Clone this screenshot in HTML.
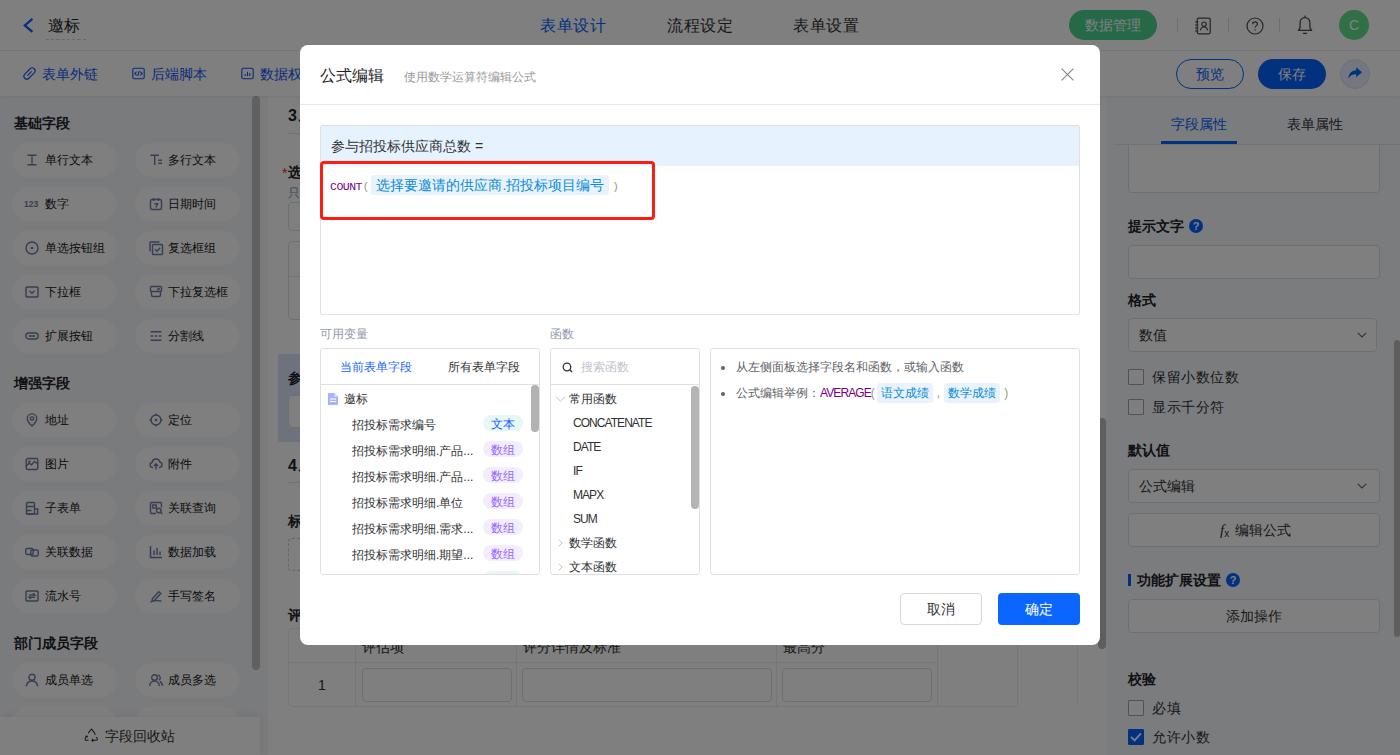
<!DOCTYPE html>
<html lang="zh">
<head>
<meta charset="utf-8">
<title>公式编辑</title>
<style>
*{box-sizing:border-box;margin:0;padding:0}
html,body{width:1400px;height:755px;overflow:hidden;background:#fff}
body{font-family:"Liberation Sans",sans-serif;font-size:14px;color:#303133;position:relative}
.a{position:absolute}
.t{position:absolute;white-space:nowrap}
svg{display:block;position:absolute;overflow:visible}
/* ---------- background page ---------- */
#page{position:absolute;left:0;top:0;width:1400px;height:755px;background:#fff;overflow:hidden;z-index:0}
#topbar{left:0;top:0;width:1400px;height:51px;background:#fff;border-bottom:1px solid #ebebeb}
#toolbar{left:0;top:51px;width:1400px;height:45px;background:#fff;box-shadow:0 1px 3px rgba(0,0,0,.07);z-index:2}
.nav{font-size:16px;letter-spacing:.5px;height:24px;line-height:24px;top:13.500px;color:#303133}
.lnk{font-size:14px;height:20px;line-height:20px;top:64px;color:#1456f0}
#left{left:0;top:96px;width:268px;height:659px;background:#f5f6fa}
.sec{font-size:14px;font-weight:bold;left:14px;height:20px;line-height:20px;color:#1f2329}
.pill{position:absolute;width:105px;height:34px;border-radius:17px;background:#fefefe}
.pill span{position:absolute;left:33px;top:0;height:34px;line-height:35px;font-size:12px;color:#14171c;white-space:nowrap}
.pill svg{left:11px;top:10px;width:14px;height:14px;stroke:#6f7da3;fill:none;stroke-width:1.4}
#center{left:268px;top:96px;width:838px;height:659px;background:#fff}
.h{font-size:16px;font-weight:bold;left:20px;height:22px;line-height:22px;color:#1f2329}
.fl{font-size:14px;font-weight:bold;left:20px;height:20px;line-height:20px;color:#1f2329}
.hr{position:absolute;left:20px;width:789px;height:1px;background:#e4e7ed}
.inp{position:absolute;background:#fff;border:1px solid #dcdfe6;border-radius:4px}
#right{left:1106px;top:96px;width:294px;height:659px;background:#f6f8fc}
.lab{font-size:14px;font-weight:bold;left:1128px;height:20px;line-height:20px;color:#1f2329}
.box{position:absolute;left:1128px;width:252px;background:#fff;border:1px solid #dcdfe6;border-radius:4px}
.cb{position:absolute;left:1128px;width:16px;height:16px;background:#fff;border:1px solid #a2a3b8;border-radius:1px}
.cbl{font-size:14px;letter-spacing:.5px;left:1152px;height:20px;line-height:20px;color:#303133}
/* ---------- overlay + modal ---------- */
#mask{left:0;top:0;width:1400px;height:755px;background:rgba(0,0,0,.5);z-index:1}
#modal{left:300px;top:45px;width:800px;height:600px;background:#fff;border-radius:8px;z-index:2}
.pan{position:absolute;background:#fff;border:1px solid #e0e0e0;border-radius:3px;overflow:hidden}
.r12{position:absolute;white-space:nowrap;font-size:12px;height:18px;line-height:18px;color:#303133}
.tag{position:absolute;left:162px;width:40px;height:16px;border-radius:8px;font-size:12px;line-height:19px;text-align:center;margin-top:-1px}
.tg1{background:#e6f7f6;color:#1f5bff}
.tg2{background:#f3eeff;color:#9666ff}
.fn{position:absolute;white-space:nowrap;font-size:12px;height:18px;line-height:18px;color:#303133;letter-spacing:-.95px}
.tok{display:inline-block;background:#e8f3fd;color:#0a8bd6;border-radius:3px}
.kw{color:#770088}.br{color:#999977}
</style>
</head>
<body>
<div id="page">
  <div id="topbar" class="a">
    <svg style="left:22px;top:17px;width:12px;height:16px" viewBox="0 0 12 16"><path d="M10.4 1.9 L2.8 8.4 L10.4 14.9" fill="none" stroke="#0562ff" stroke-width="2.3"/></svg>
    <div class="t" style="left:48px;top:14px;height:24px;line-height:24px;font-size:16px;color:#1f2329">邀标</div>
    <div class="a" style="left:46px;top:39px;width:41px;height:1px;background:repeating-linear-gradient(90deg,#d4d4d4 0 3.250px,transparent 3.250px 5.250px)"></div>
    <div class="t nav" style="left:540px;color:#0562ff">表单设计</div>
    <div class="t nav" style="left:667px">流程设定</div>
    <div class="t nav" style="left:793px">表单设置</div>
    <div class="a" style="left:1069px;top:10px;width:88px;height:30px;border-radius:15px;background:#4bd291;color:#fff;font-size:14px;line-height:30px;text-align:center">数据管理</div>
    <div class="a" style="left:1177px;top:18px;width:1px;height:14px;background:#dcdcdc"></div>
    <div class="a" style="left:1228px;top:18px;width:1px;height:14px;background:#dcdcdc"></div>
    <div class="a" style="left:1279px;top:18px;width:1px;height:14px;background:#dcdcdc"></div>
    <svg style="left:1194px;top:17px;width:18px;height:18px" viewBox="0 0 18 18" fill="none" stroke="#4a4a4a" stroke-width="1.2"><rect x="3.2" y="1.2" width="13" height="15.6" rx="1.5"/><path d="M1 5h3.4M1 8h3.4M1 11h3.4M1 14h3.4"/><circle cx="10" cy="7.2" r="2.2"/><path d="M6.4 13.4c.4-2.4 1.8-3.4 3.6-3.4s3.2 1 3.6 3.4"/></svg>
    <svg style="left:1246px;top:17px;width:18px;height:18px" viewBox="0 0 18 18" fill="none" stroke="#4a4a4a" stroke-width="1.2"><circle cx="9" cy="9" r="8"/><path d="M6.6 7.2c0-1.5 1-2.4 2.4-2.4s2.4.9 2.4 2.2c0 1.6-2.3 1.7-2.3 3.6"/><circle cx="9.1" cy="12.9" r=".7" fill="#4a4a4a" stroke="none"/></svg>
    <svg style="left:1297px;top:15px;width:16px;height:20px" viewBox="0 0 16 20" fill="none" stroke="#4a4a4a" stroke-width="1.3"><path d="M8 2.6c-3 0-4.9 2.300-4.900 5.200v4.800L1.400 15.400h13.200l-1.700-2.800V7.800c0-2.900-1.900-5.200-4.900-5.200z" stroke-linejoin="round"/><path d="M6 18.400h4"/><circle cx="8" cy="1.300" r=".8" fill="#4a4a4a" stroke="none"/></svg>
    <div class="a" style="left:1339px;top:10px;width:30px;height:30px;border-radius:15px;background:#62e08c;color:#fff;font-size:14px;line-height:30px;text-align:center">C</div>
  </div>
  <div id="toolbar" class="a">
    <svg style="left:22px;top:15px;width:15px;height:15px" viewBox="0 0 15 15" fill="none" stroke="#1456f0" stroke-width="1.100"><g transform="rotate(-45 7.500 7.500)"><rect x=".8" y="4.600" width="13.400" height="5.800" rx="2.900"/><path d="M4.600 7.500h5.800"/></g></svg>
    <div class="t lnk" style="left:42px;top:13px">表单外链</div>
    <svg style="left:132px;top:16px;width:13px;height:13px" viewBox="0 0 13 13" fill="none" stroke="#1456f0" stroke-width="1.100"><rect x=".8" y="1.300" width="11.400" height="10.400" rx="1.500"/><path d="M4.600 4.600L2.800 6.500l1.800 1.900M8.400 4.600l1.800 1.900-1.800 1.900M7.300 4L5.700 9"/></svg>
    <div class="t lnk" style="left:151px;top:13px">后端脚本</div>
    <svg style="left:241px;top:16px;width:13px;height:13px" viewBox="0 0 13 13" fill="none" stroke="#1456f0" stroke-width="1.100"><rect x=".8" y="1.300" width="11.400" height="10.400" rx="1.500"/><path d="M4.200 9V7M6.500 9V4.800M8.800 9V6"/></svg>
    <div class="t lnk" style="left:260px;top:13px">数据权限</div>
    <div class="a" style="left:1176px;top:8px;width:68px;height:30px;border-radius:15px;border:1px solid #0562ff;color:#0562ff;font-size:14px;line-height:28px;text-align:center">预览</div>
    <div class="a" style="left:1258px;top:8px;width:68px;height:30px;border-radius:15px;background:#0562ff;color:#fff;font-size:14px;line-height:30px;text-align:center">保存</div>
    <div class="a" style="left:1340px;top:8px;width:30px;height:30px;border-radius:15px;background:#e8eeff;border:1px solid #d6e0fb"></div>
    <svg style="left:1347px;top:15px;width:16px;height:15px" viewBox="0 0 16 15"><path d="M9.200 1.200L15 6.200 9.200 11.200V8.200C5.600 8.100 3.200 9.400 1.400 12.800 1.600 8 4.200 4.600 9.200 4.300z" fill="#0562ff"/></svg>
  </div>
  <div id="left" class="a">
    <div class="t sec" style="top:17px">基础字段</div>
    <div class="pill" style="left:12px;top:47px"><svg viewBox="0 0 14 14" style="left:13px"><path d="M2.500 2.300h9M2.500 11.700h9M7 2.300v9.400"/></svg><span>单行文本</span></div>
    <div class="pill" style="left:135px;top:47px"><svg viewBox="0 0 14 14" style="left:13.500px"><path d="M1.500 2.300h8.500M5.700 2.300v9.700M9.200 7.300h3.800M9.200 10.300h3.800"/></svg><span>多行文本</span></div>
    <div class="pill" style="left:12px;top:91px"><svg viewBox="0 0 14 14" style="left:13px"><text x="-1" y="10.300" font-size="8.500" font-weight="bold" font-family="Liberation Sans,sans-serif" fill="#6f7da3" stroke="none">123</text></svg><span>数字</span></div>
    <div class="pill" style="left:135px;top:91px"><svg viewBox="0 0 14 14" style="left:13.500px"><rect x="1.500" y="2.500" width="11" height="10" rx="1.500"/><path d="M4.500 1v3M9.500 1v3M5.300 6.800h3.400L6.800 10.500"/></svg><span>日期时间</span></div>
    <div class="pill" style="left:12px;top:135px"><svg viewBox="0 0 14 14" style="left:13px"><circle cx="7" cy="7" r="6"/><circle cx="7" cy="7" r="1.300" fill="#6f7da3" stroke="none"/></svg><span>单选按钮组</span></div>
    <div class="pill" style="left:135px;top:135px"><svg viewBox="0 0 14 14" style="left:13.500px"><rect x="3.500" y="3.500" width="10" height="10" rx="1"/><path d="M1 10.500V1.500a.5 .5 0 0 1 .5-.5h9M6 8.300l2 2 3.200-3.600"/></svg><span>复选框组</span></div>
    <div class="pill" style="left:12px;top:179px"><svg viewBox="0 0 14 14" style="left:13px"><rect x="1" y="2" width="12" height="10" rx="1"/><path d="M4.500 5.800L7 8.300l2.500-2.500"/></svg><span>下拉框</span></div>
    <div class="pill" style="left:135px;top:179px"><svg viewBox="0 0 14 14" style="left:13.500px"><rect x="1.500" y="1.500" width="11" height="5" rx="1"/><path d="M8.200 3.800l1 1 1.600-1.800M2.500 6.500v3.500a1.500 1.500 0 0 0 1.500 1.500h6a1.500 1.500 0 0 0 1.500-1.500V6.500"/></svg><span>下拉复选框</span></div>
    <div class="pill" style="left:12px;top:223px"><svg viewBox="0 0 14 14" style="left:13px"><rect x=".8" y="4" width="12.400" height="6" rx="3"/><path d="M3.800 7h6.400" stroke-width="1.600"/></svg><span>扩展按钮</span></div>
    <div class="pill" style="left:135px;top:223px"><svg viewBox="0 0 14 14" style="left:13.500px"><path d="M1.500 2.800h11M1.500 11.200h11M1.500 7h2.600M5.700 7h2.600M9.900 7h2.600"/></svg><span>分割线</span></div>
    <div class="t sec" style="top:277px">增强字段</div>
    <div class="pill" style="left:12px;top:307px"><svg viewBox="0 0 14 14" style="left:13px"><path d="M7 13S2.300 9.200 2.300 5.600a4.700 4.700 0 0 1 9.400 0C11.700 9.200 7 13 7 13z"/><circle cx="7" cy="5.600" r="1.700"/></svg><span>地址</span></div>
    <div class="pill" style="left:135px;top:307px"><svg viewBox="0 0 14 14" style="left:13.500px"><circle cx="7" cy="7" r="5"/><circle cx="7" cy="7" r="1.300" fill="#6f7da3" stroke="none"/><path d="M7 .5v2.500M7 11v2.500M.5 7h2.500M11 7h2.500"/></svg><span>定位</span></div>
    <div class="pill" style="left:12px;top:351px"><svg viewBox="0 0 14 14" style="left:13px"><rect x="1.200" y="1.500" width="11.600" height="11" rx="1.500"/><path d="M1.200 9l3-2.800 2.300 1.600 3-3.300 3.300 2.500M4.300 4.600h.1" /><circle cx="4.300" cy="4.600" r=".6"/></svg><span>图片</span></div>
    <div class="pill" style="left:135px;top:351px"><svg viewBox="0 0 14 14" style="left:13.500px"><path d="M4 10.500H3.400A2.700 2.700 0 0 1 3.200 5.200 3.900 3.900 0 0 1 10.800 5 2.800 2.800 0 0 1 10.600 10.500H10M7 12.500V7M4.900 8.900L7 6.800l2.100 2.100"/></svg><span>附件</span></div>
    <div class="pill" style="left:12px;top:395px"><svg viewBox="0 0 14 14" style="left:13px"><rect x="1.500" y="1.500" width="8" height="11.500" rx="1"/><path d="M1.500 5.500h8M9.500 8h3.200v5H1.500M1.500 9.500h5"/></svg><span>子表单</span></div>
    <div class="pill" style="left:135px;top:395px"><svg viewBox="0 0 14 14" style="left:13.500px"><path d="M12.500 6.500V2.500a1 1 0 0 0-1-1h-9a1 1 0 0 0-1 1v9a1 1 0 0 0 1 1h4.500"/><rect x="3.800" y="4" width="3.500" height="3"/><circle cx="9.800" cy="9.500" r="2.300"/><path d="M11.500 11.200l1.800 1.800"/></svg><span>关联查询</span></div>
    <div class="pill" style="left:12px;top:439px"><svg viewBox="0 0 14 14" style="left:13px"><rect x=".8" y="3.500" width="7.400" height="6" rx="1.500"/><rect x="5.800" y="5" width="7.400" height="6" rx="1.500"/></svg><span>关联数据</span></div>
    <div class="pill" style="left:135px;top:439px"><svg viewBox="0 0 14 14" style="left:13.500px"><path d="M1.500 1v11.500h11.500M5 10V5.500M8 10V3M11 10V6.500" stroke-width="1.500"/></svg><span>数据加载</span></div>
    <div class="pill" style="left:12px;top:483px"><svg viewBox="0 0 14 14" style="left:13px"><rect x="1" y="2" width="12" height="10" rx="1"/><path d="M4 6h6l-2-1.800M10 8.300H4l2 1.800"/></svg><span>流水号</span></div>
    <div class="pill" style="left:135px;top:483px"><svg viewBox="0 0 14 14" style="left:13.500px"><path d="M3.500 9.500l6.300-6.800 2 1.800-6.300 6.800-2.700.8zM1.500 13c3-1.500 6-1.800 11-1"/></svg><span>手写签名</span></div>
    <div class="t sec" style="top:537px">部门成员字段</div>
    <div class="pill" style="left:12px;top:567px"><svg viewBox="0 0 14 14" style="left:13px"><circle cx="7" cy="4.300" r="3"/><path d="M1.300 13.300c.5-3.600 2.800-5.300 5.700-5.300s5.200 1.700 5.700 5.300"/></svg><span>成员单选</span></div>
    <div class="pill" style="left:135px;top:567px"><svg viewBox="0 0 14 14" style="left:13.500px"><circle cx="5.500" cy="4.500" r="2.800"/><path d="M.6 13c.4-3.300 2.400-4.900 4.900-4.900s4.500 1.600 4.900 4.900M8.500 1.900a2.800 2.800 0 0 1 1.200 5.300M10.800 8.500c1.600.7 2.500 2.200 2.800 4.500"/></svg><span>成员多选</span></div>
    <div class="pill" style="left:12px;top:611px"><svg viewBox="0 0 14 14" style="left:13px"></svg><span>部门单选</span></div>
    <div class="pill" style="left:135px;top:611px"><svg viewBox="0 0 14 14" style="left:13.500px"></svg><span>部门多选</span></div>
    <div class="a" style="left:252px;top:0;width:8px;height:574px;border-radius:4px;background:#c1c1c1"></div>
    <div class="a" style="left:0;top:621px;width:260px;height:38px;background:#fff;box-shadow:2px -2px 8px rgba(0,0,0,.06)"></div>
    <svg style="left:84px;top:632px;width:15px;height:15px" viewBox="0 0 15 15" fill="none" stroke="#303133" stroke-width="1.100"><path d="M5.600 3.300L7.500 1l1.900 2.300M9.400 3.300l2 3.400M4.300 5.300l1.300-2M2.600 8.200l-1.300 2.300c-.4.800 0 1.700 1 1.700h2.200M1.500 8.800l1.200-.8 1 1.200M8 12.200h4.200c1 0 1.500-.900 1-1.700L12.400 9M9.200 11l-1.300 1.200 1.300 1.300"/></svg>
    <div class="t" style="left:105px;top:630px;height:20px;line-height:20px;font-size:14px;color:#303133">字段回收站</div>
  </div>
  <div id="center" class="a">
    <div class="t h" style="top:9px">3、选择供应商</div><div class="hr" style="top:37px"></div>
    <div class="t" style="left:14px;top:67px;height:20px;line-height:20px;font-size:14px;color:#f5222d">*</div><div class="t fl" style="top:66px">选择要邀请的供应商</div>
    <div class="t" style="left:20px;top:89px;height:17px;line-height:17px;font-size:12px;color:#7088c8">只能选择已审核通过的供应商</div>
    <div class="inp" style="left:20px;top:106px;width:789px;height:29px"></div>
    <div class="inp" style="left:20px;top:145px;width:789px;height:79px"><div class="a" style="left:0;top:34px;width:787px;height:1px;background:#e4e7ed"></div></div>
    <div class="a" style="left:10px;top:258px;width:812px;height:88px;background:#dde5f9"></div>
    <div class="t fl" style="top:272px">参与招投标供应商总数</div>
    <div class="inp" style="left:20px;top:299px;width:789px;height:33px"></div>
    <div class="t h" style="top:359px">4、评标</div><div class="hr" style="top:386px"></div>
    <div class="t fl" style="top:415px">标书</div>
    <div class="inp" style="left:20px;top:442px;width:789px;height:33px;border-style:dashed;border-color:#c8ccd4"></div>
    <div class="t fl" style="top:509px">评分标准</div>
    <div class="inp" style="left:20px;top:532px;width:730px;height:79px;border-color:#ececec;border-radius:4px">
      <div class="a" style="left:66px;top:0;width:1px;height:77px;background:#ececec"></div>
      <div class="a" style="left:227px;top:0;width:1px;height:77px;background:#ececec"></div>
      <div class="a" style="left:487px;top:0;width:1px;height:77px;background:#ececec"></div>
      <div class="a" style="left:648px;top:0;width:1px;height:77px;background:#ececec"></div>
      <div class="a" style="left:0;top:33px;width:648px;height:1px;background:#ececec"></div>
      <div class="t" style="left:73px;top:8px;height:20px;line-height:20px;font-size:14px;color:#303133">评估项</div>
      <div class="t" style="left:234px;top:8px;height:20px;line-height:20px;font-size:14px;color:#303133">评分详情及标准</div>
      <div class="t" style="left:494px;top:8px;height:20px;line-height:20px;font-size:14px;color:#303133">最高分</div>
      <div class="t" style="left:0;top:46px;width:66px;text-align:center;height:20px;line-height:20px;font-size:14px;color:#303133">1</div>
      <div class="inp" style="left:73px;top:39px;width:150px;height:34px"></div>
      <div class="inp" style="left:233px;top:39px;width:250px;height:34px"></div>
      <div class="inp" style="left:493px;top:39px;width:150px;height:34px"></div>
    </div>
    <div class="a" style="left:770px;top:532px;width:40px;height:79px;border-right:1px solid #ececec;border-bottom:1px solid transparent;border-bottom-right-radius:5px"></div>
    <div class="a" style="left:830px;top:322px;width:8px;height:231px;border-radius:4px;background:#bdbdbd"></div>
  </div>
  <div id="right" class="a">
    <div class="box" style="left:22px;top:24px;height:73px"></div>
    <div class="a" style="left:0;top:0;width:294px;height:49px;background:#f6f8fc;border-bottom:1px solid #e1e4ea"></div>
    <div class="a" style="left:0;top:48px;width:8px;height:1px;background:#f6f8fc"></div>
    <div class="t" style="left:65px;top:18px;height:20px;line-height:20px;font-size:14px;color:#0562ff">字段属性</div>
    <div class="t" style="left:181px;top:18px;height:20px;line-height:20px;font-size:14px;color:#303133">表单属性</div>
    <div class="a" style="left:55px;top:45px;width:76px;height:3px;background:#0562ff"></div>
    <div class="t lab" style="left:22px;top:120px">提示文字</div><div class="a" style="left:83px;top:123px;width:14px;height:14px;border-radius:7px;background:#0562ff;color:#fff;font-size:11px;font-weight:bold;line-height:14px;text-align:center">?</div>
    <div class="box" style="left:22px;top:149px;height:34px"></div>
    <div class="t lab" style="left:22px;top:194px">格式</div>
    <div class="box" style="left:22px;top:222px;height:34px;width:249px"><div class="t" style="left:10px;top:6px;height:20px;line-height:20px;font-size:14px;color:#303133">数值</div><svg style="left:228px;top:13px;width:10px;height:6px" viewBox="0 0 10 6"><path d="M.8.8L5 5l4.200-4.200" fill="none" stroke="#606266" stroke-width="1.100"/></svg></div>
    <div class="cb" style="left:22px;top:273px"></div>
    <div class="t cbl" style="left:46px;top:271px">保留小数位数</div>
    <div class="cb" style="left:22px;top:303px"></div>
    <div class="t cbl" style="left:46px;top:301px">显示千分符</div>
    <div class="t lab" style="left:22px;top:344px">默认值</div>
    <div class="box" style="left:22px;top:373px;height:34px"><div class="t" style="left:10px;top:6px;height:20px;line-height:20px;font-size:14px;color:#303133">公式编辑</div><svg style="left:228px;top:13px;width:10px;height:6px" viewBox="0 0 10 6"><path d="M.8.8L5 5l4.200-4.200" fill="none" stroke="#606266" stroke-width="1.100"/></svg></div>
    <div class="box" style="left:22px;top:417px;height:34px"><div class="t" style="left:91px;top:6px;height:20px;line-height:20px;font-size:14px;color:#303133"><i style="font-family:'Liberation Serif',serif;font-size:15px">f</i><span style="font-size:10px;position:relative;top:2px;margin-right:6px">x</span>编辑公式</div></div>
    <div class="a" style="left:22px;top:478px;width:3px;height:12px;background:#0562ff"></div>
    <div class="t lab" style="left:31px;top:474px">功能扩展设置</div><div class="a" style="left:120px;top:477px;width:14px;height:14px;border-radius:7px;background:#0562ff;color:#fff;font-size:11px;font-weight:bold;line-height:14px;text-align:center">?</div>
    <div class="box" style="left:22px;top:503px;height:34px;text-align:center;line-height:32px;font-size:14px;color:#303133">添加操作</div>
    <div class="t lab" style="left:22px;top:573px">校验</div>
    <div class="cb" style="left:22px;top:604px"></div>
    <div class="t cbl" style="left:46px;top:602px">必填</div>
    <div class="cb" style="left:22px;top:633px;background:#0562ff;border-color:#0562ff"><svg style="left:1px;top:2px;width:12px;height:10px" viewBox="0 0 12 10"><path d="M1 4.800l3.600 3.600L11 1.400" fill="none" stroke="#fff" stroke-width="1.700"/></svg></div>
    <div class="t cbl" style="left:46px;top:631px">允许小数</div>
    <div class="a" style="left:288px;top:244px;width:6px;height:297px;border-radius:3px;background:#bdbdbd"></div>
  </div>
</div>
<div id="mask" class="a"></div>
<div id="modal" class="a">
  <div class="t" style="left:20px;top:19px;height:24px;line-height:24px;font-size:16px;color:#1f2329">公式编辑</div>
  <div class="t" style="left:104px;top:23px;height:18px;line-height:18px;font-size:12px;color:#999">使用数学运算符编辑公式</div>
  <svg style="left:761px;top:23.300px;width:13px;height:13px" viewBox="0 0 13 13"><path d="M.6.600l11.800 11.800M12.400.600L.6 12.400" stroke="#858585" stroke-width="1.150" fill="none"/></svg>
  <div class="a" style="left:0;top:59px;width:800px;height:1px;background:#e8e8e8"></div>
  <div class="pan" style="left:20px;top:80px;width:760px;height:190px;border-radius:2px">
    <div class="a" style="left:0;top:0;width:758px;height:40px;background:#e6f3fe"></div>
    <div class="t" style="left:10px;top:10px;height:20px;line-height:20px;font-size:14px;color:#303133">参与招投标供应商总数 =</div>
    <div class="t" style="left:9px;top:48px;height:22px;line-height:22px;font-size:14px"><span class="kw" style="font-family:'Liberation Mono',monospace;font-size:11.500px;letter-spacing:-.5px;position:relative;top:-.5px">COUNT</span><span class="br" style="font-family:'Liberation Mono',monospace;font-size:11.500px;margin-left:.5px">(</span><span class="tok" style="margin:0 3px 0 2px;padding:0 5px;height:20px;line-height:20px">选择要邀请的供应商.招投标项目编号</span><span class="br" style="font-family:'Liberation Mono',monospace;font-size:11px">)</span></div>
  </div>
  <div class="a" style="left:20px;top:116px;width:335px;height:59px;border:3px solid #fb1d0f;border-radius:4px"></div>
  <div class="t" style="left:20px;top:280px;height:18px;line-height:18px;font-size:12px;color:#8f98aa">可用变量</div>
  <div class="t" style="left:250px;top:280px;height:18px;line-height:18px;font-size:12px;color:#8f98aa">函数</div>
  <div class="pan" style="left:20px;top:303px;width:220px;height:227px">
    <div class="r12" style="left:19px;top:9px;color:#1a66ff">当前表单字段</div><div class="r12" style="left:127px;top:9px">所有表单字段</div>
    <div class="a" style="left:0;top:35px;width:218px;height:1px;background:#e0e0e0"></div>
    <svg style="left:7px;top:44px;width:10px;height:12px" viewBox="0 0 10 12"><path d="M0 0h6.500L10 3.500V12H0z" fill="#a5b4fb"/><path d="M6.300 0v3.700H10" fill="#d6dcff"/><path d="M2 6h6M2 8.500h6" stroke="#fff" stroke-width="1.100"/></svg>
    <div class="r12" style="left:23px;top:41px">邀标</div>
    <div class="r12" style="left:31px;top:67px">招投标需求编号</div><div class="tag tg1" style="top:67px">文本</div>
    <div class="r12" style="left:31px;top:93px">招投标需求明细.产品...</div><div class="tag tg2" style="top:93px">数组</div>
    <div class="r12" style="left:31px;top:119px">招投标需求明细.产品...</div><div class="tag tg2" style="top:119px">数组</div>
    <div class="r12" style="left:31px;top:145px">招投标需求明细.单位</div><div class="tag tg2" style="top:145px">数组</div>
    <div class="r12" style="left:31px;top:171px">招投标需求明细.需求...</div><div class="tag tg2" style="top:171px">数组</div>
    <div class="r12" style="left:31px;top:197px">招投标需求明细.期望...</div><div class="tag tg2" style="top:197px">数组</div>
    <div class="r12" style="left:31px;top:223px">招投标需求明细.备注</div><div class="tag tg1" style="top:223px">文本</div>
    <div class="a" style="left:210px;top:36px;width:8px;height:47px;border-radius:4px;background:#b2b2b2"></div>
  </div>
  <div class="pan" style="left:250px;top:303px;width:150px;height:227px">
    <svg style="left:11px;top:13px;width:11px;height:11px" viewBox="0 0 11 11"><circle cx="5" cy="5" r="3.800" fill="none" stroke="#303133" stroke-width="1.300"/><path d="M7.800 7.800l2.200 2.200" stroke="#303133" stroke-width="1.300"/></svg>
    <div class="r12" style="left:30px;top:9px;color:#c0c4cc">搜索函数</div>
    <div class="a" style="left:0;top:35px;width:148px;height:1px;background:#e0e0e0"></div>
    <svg style="left:4px;top:47px;width:11px;height:6px" viewBox="0 0 11 6"><path d="M.7.600L5.500 5.200 10.300.600" fill="none" stroke="#c0c4cc" stroke-width="1"/></svg>
    <div class="r12" style="left:18px;top:41px">常用函数</div>
    <div class="fn" style="left:22px;top:64.5px">CONCATENATE</div>
    <div class="fn" style="left:22px;top:88.5px">DATE</div>
    <div class="fn" style="left:22px;top:112.5px">IF</div>
    <div class="fn" style="left:22px;top:136.5px">MAPX</div>
    <div class="fn" style="left:22px;top:160.5px">SUM</div>
    <svg style="left:7px;top:189.5px;width:5px;height:8px" viewBox="0 0 5 8"><path d="M.7.700L4.200 4 .7 7.300" fill="none" stroke="#c0c4cc" stroke-width="1"/></svg><div class="r12" style="left:18px;top:184.5px">数学函数</div>
    <svg style="left:7px;top:213.5px;width:5px;height:8px" viewBox="0 0 5 8"><path d="M.7.700L4.200 4 .7 7.300" fill="none" stroke="#c0c4cc" stroke-width="1"/></svg><div class="r12" style="left:18px;top:208.5px">文本函数</div>
    <div class="a" style="left:140px;top:37px;width:8px;height:123px;border-radius:4px;background:#b4b4b4"></div>
  </div>
  <div class="pan" style="left:410px;top:303px;width:370px;height:227px">
    <div class="a" style="left:10px;top:17px;width:4px;height:4px;border-radius:2px;background:#606266"></div><div class="r12" style="left:25px;top:9px;color:#606266">从左侧面板选择字段名和函数，或输入函数</div>
    <div class="a" style="left:10px;top:43px;width:4px;height:4px;border-radius:2px;background:#606266"></div><div class="r12" style="left:25px;top:34px;height:20px;line-height:20px;color:#606266">公式编辑举例：<span class="kw" style="letter-spacing:-.9px">AVERAGE</span><span class="br">(</span><span class="tok" style="margin:0 4px 0 2px;padding:0 4px;height:20px;line-height:20px;vertical-align:top">语文成绩</span><span class="br">,</span><span class="tok" style="margin:0 4px 0 4px;padding:0 4px;height:20px;line-height:20px;vertical-align:top">数学成绩</span><span class="br">)</span></div>
  </div>
  <div class="a" style="left:600px;top:548px;width:82px;height:32px;border:1px solid #d9d9d9;border-radius:4px;background:#fff;font-size:14px;line-height:30px;text-align:center;color:#303133">取消</div>
  <div class="a" style="left:698px;top:548px;width:82px;height:32px;border-radius:4px;background:#0a66ff;font-size:14px;line-height:32px;text-align:center;color:#fff">确定</div>
</div>
</body>
</html>
